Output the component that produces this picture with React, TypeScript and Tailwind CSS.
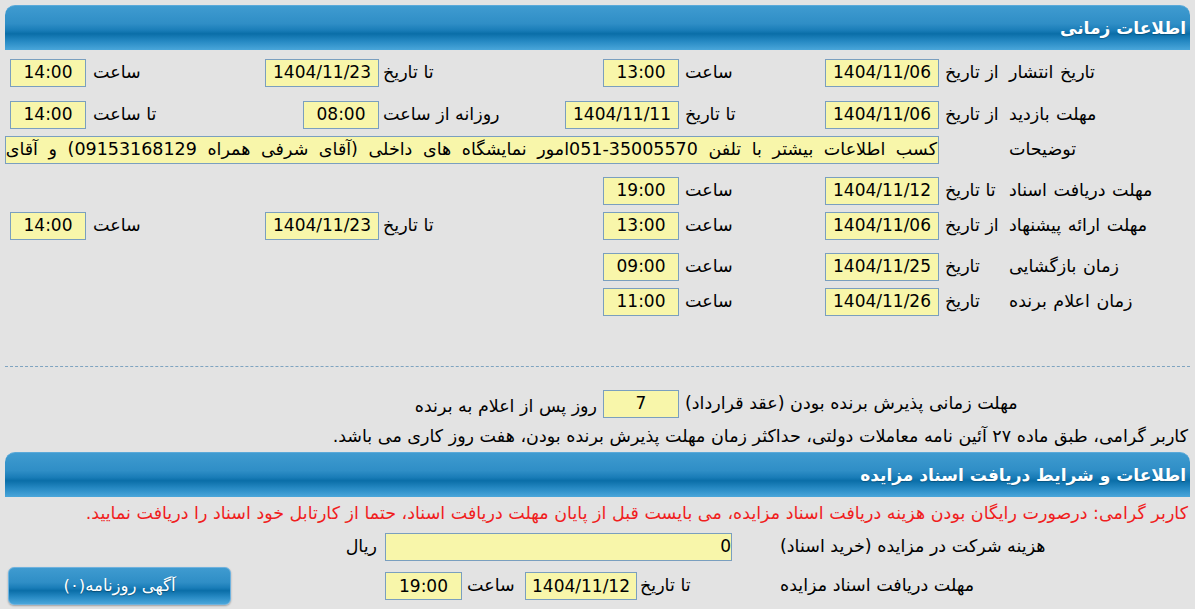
import { ReactNode } from 'react';

// Section header bar with blue glossy gradient
function SectionHeader({ children }: { children: ReactNode }) {
  return (
    <div className="h-[45px] rounded-t-[10px] border-t border-[#5aa9d9] bg-[linear-gradient(to_bottom,#3f9bd0_0%,#2f8ec6_40%,#1a7db8_55%,#0a6ea8_63%,#2689c3_80%,#4aa6da_100%)] flex items-center pr-[4px] text-white font-bold text-[17px] [text-shadow:0_1px_1px_rgba(0,0,0,0.25)]">
      {children}
    </div>
  );
}

// Yellow read-only field
function Field({ children, className = '' }: { children: ReactNode; className?: string }) {
  return (
    <div className={"h-[28px] shrink-0 flex items-center border border-[#7a9fbf] bg-[#f8f6aa] text-black whitespace-nowrap overflow-hidden " + className}>
      {children}
    </div>
  );
}

function DateField({ value }: { value: string }) {
  return <Field className="w-[114px] justify-center text-[17px]">{value}</Field>;
}

function TimeField({ value }: { value: string }) {
  return <Field className="w-[76px] justify-center text-[17px]">{value}</Field>;
}

// fixed-width cells of the time grid (right to left)
function C1({ children }: { children?: ReactNode }) {
  return <div className="w-[184px] shrink-0 flex items-center justify-end pl-[3px] whitespace-nowrap [word-spacing:1px]">{children}</div>;
}
function C2({ children }: { children?: ReactNode }) {
  return <div className="w-[67px] shrink-0 flex items-center justify-end pl-[6px] whitespace-nowrap">{children}</div>;
}
function C3({ children }: { children?: ReactNode }) {
  return <div className="w-[198px] shrink-0 flex items-center">{children}</div>;
}
function C4({ children }: { children?: ReactNode }) {
  return <div className="w-[62px] shrink-0 flex items-center justify-end pl-[6px] whitespace-nowrap">{children}</div>;
}
function C5({ children }: { children?: ReactNode }) {
  return <div className="w-[179px] shrink-0 flex items-center">{children}</div>;
}
function C6({ children }: { children?: ReactNode }) {
  return <div className="w-[121px] shrink-0 flex items-center justify-end pl-[4px] whitespace-nowrap">{children}</div>;
}
function C7({ children }: { children?: ReactNode }) {
  return <div className="w-[214px] shrink-0 flex items-center">{children}</div>;
}
function C8({ children }: { children?: ReactNode }) {
  return <div className="w-[79px] shrink-0 flex items-center justify-end pl-[7px] whitespace-nowrap">{children}</div>;
}
function C9({ children }: { children?: ReactNode }) {
  return <div className="w-[81px] shrink-0 flex items-center">{children}</div>;
}

function Row({ children, className = '' }: { children: ReactNode; className?: string }) {
  return <div className={"h-[35px] flex items-stretch " + className}>{children}</div>;
}

export default function App() {
  return (
    <div
      dir="rtl"
      className="w-[1195px] h-[609px] overflow-hidden bg-[#e3e3e3] px-[5px] pt-[5px] text-[17.5px] text-black font-['DejaVu_Sans',sans-serif] leading-none"
    >
      <SectionHeader>اطلاعات زمانی</SectionHeader>

      <Row className="mt-[5px]">
        <C1>تاریخ انتشار</C1>
        <C2>از تاریخ</C2>
        <C3><DateField value="1404/11/06" /></C3>
        <C4>ساعت</C4>
        <C5><TimeField value="13:00" /></C5>
        <C6>تا تاریخ</C6>
        <C7><DateField value="1404/11/23" /></C7>
        <C8>ساعت</C8>
        <C9><TimeField value="14:00" /></C9>
      </Row>

      <Row className="mt-[7px]">
        <C1>مهلت بازدید</C1>
        <C2>از تاریخ</C2>
        <C3><DateField value="1404/11/06" /></C3>
        <C4>تا تاریخ</C4>
        <C5><DateField value="1404/11/11" /></C5>
        <C6>روزانه از ساعت</C6>
        <C7><TimeField value="08:00" /></C7>
        <C8>تا ساعت</C8>
        <C9><TimeField value="14:00" /></C9>
      </Row>

      <Row>
        <C1>توضیحات</C1>
        <C2 />
        <div className="flex-1 flex items-center min-w-0">
          <Field className="w-full pr-[1px] text-[17.5px] [word-spacing:5px]">
            کسب اطلاعات بیشتر با تلفن 35005570-051امور نمایشگاه های داخلی (آقای شرفی همراه 09153168129) و آقای محمدی همراه 09151234567
          </Field>
        </div>
      </Row>

      <Row className="mt-[6px]">
        <C1>مهلت دریافت اسناد</C1>
        <C2>تا تاریخ</C2>
        <C3><DateField value="1404/11/12" /></C3>
        <C4>ساعت</C4>
        <C5><TimeField value="19:00" /></C5>
      </Row>

      <Row>
        <C1>مهلت ارائه پیشنهاد</C1>
        <C2>از تاریخ</C2>
        <C3><DateField value="1404/11/06" /></C3>
        <C4>ساعت</C4>
        <C5><TimeField value="13:00" /></C5>
        <C6>تا تاریخ</C6>
        <C7><DateField value="1404/11/23" /></C7>
        <C8>ساعت</C8>
        <C9><TimeField value="14:00" /></C9>
      </Row>

      <Row className="mt-[6px]">
        <C1>زمان بازگشایی</C1>
        <C2>تاریخ</C2>
        <C3><DateField value="1404/11/25" /></C3>
        <C4>ساعت</C4>
        <C5><TimeField value="09:00" /></C5>
      </Row>

      <Row>
        <C1>زمان اعلام برنده</C1>
        <C2>تاریخ</C2>
        <C3><DateField value="1404/11/26" /></C3>
        <C4>ساعت</C4>
        <C5><TimeField value="11:00" /></C5>
      </Row>

      {/* dashed separator */}
      <div className="mt-[47px] border-t border-dashed border-[#7fa4c0]" />

      <div className="mt-[19px] h-[35px] flex items-stretch">
        <div className="w-[511px] shrink-0 flex items-center justify-end pl-[6px] whitespace-nowrap">
          مهلت زمانی پذیرش برنده بودن (عقد قرارداد)
        </div>
        <div className="flex items-center">
          <TimeField value="7" />
        </div>
        <div className="flex items-center pr-[6px] pt-[7px] whitespace-nowrap">روز پس از اعلام به برنده</div>
      </div>

      <div className="h-[31px] flex items-center pr-[2px] whitespace-nowrap">
        کاربر گرامی، طبق ماده ۲۷ آئین نامه معاملات دولتی، حداکثر زمان مهلت پذیرش برنده بودن، هفت روز کاری می باشد.
      </div>

      <SectionHeader>اطلاعات و شرایط دریافت اسناد مزایده</SectionHeader>

      <div className="h-[34px] flex items-center pr-[2px] text-[#f01e1e] whitespace-nowrap">
        کاربر گرامی: درصورت رایگان بودن هزینه دریافت اسناد مزایده، می بایست قبل از پایان مهلت دریافت اسناد، حتما از کارتابل خود اسناد را دریافت نمایید.
      </div>

      <div className="h-[31px] flex items-stretch">
        <div className="w-[412px] shrink-0 flex items-center justify-end pl-[2px] whitespace-nowrap">
          هزینه شرکت در مزایده (خرید اسناد)
        </div>
        <div className="w-[46px] shrink-0" />
        <div className="flex items-center">
          <Field className="w-[347px] justify-start pl-[3px] text-[17px]">0</Field>
        </div>
        <div className="flex items-center pr-[8px] whitespace-nowrap">ریال</div>
      </div>

      <div className="mt-[4px] h-[40px] flex items-stretch">
        <div className="w-[412px] shrink-0 flex items-center justify-end pl-[2px] whitespace-nowrap">
          مهلت دریافت اسناد مزایده
        </div>
        <div className="w-[141px] shrink-0 flex items-center justify-end pl-[3px] whitespace-nowrap">تا تاریخ</div>
        <div className="flex items-center">
          <Field className="w-[112px] justify-center text-[17px]">1404/11/12</Field>
        </div>
        <div className="w-[63px] shrink-0 flex items-center justify-end pl-[5px] whitespace-nowrap">ساعت</div>
        <div className="flex items-center">
          <Field className="w-[77px] justify-center text-[17px]">19:00</Field>
        </div>
        <div className="ms-auto me-[3px] flex items-center">
          <button className="w-[223px] h-[38px] rounded-[6px] border border-[#6fb2de] bg-[linear-gradient(to_bottom,#3f9bd0_0%,#2f8ec6_40%,#1a7db8_55%,#0a6ea8_63%,#2689c3_80%,#4aa6da_100%)] shadow-[0_1px_2px_rgba(0,0,0,0.3)] text-white text-[16.5px] font-['DejaVu_Sans',sans-serif] [text-shadow:0_1px_1px_rgba(0,0,0,0.3)]">
            آگهی روزنامه(۰)
          </button>
        </div>
      </div>
    </div>
  );
}
